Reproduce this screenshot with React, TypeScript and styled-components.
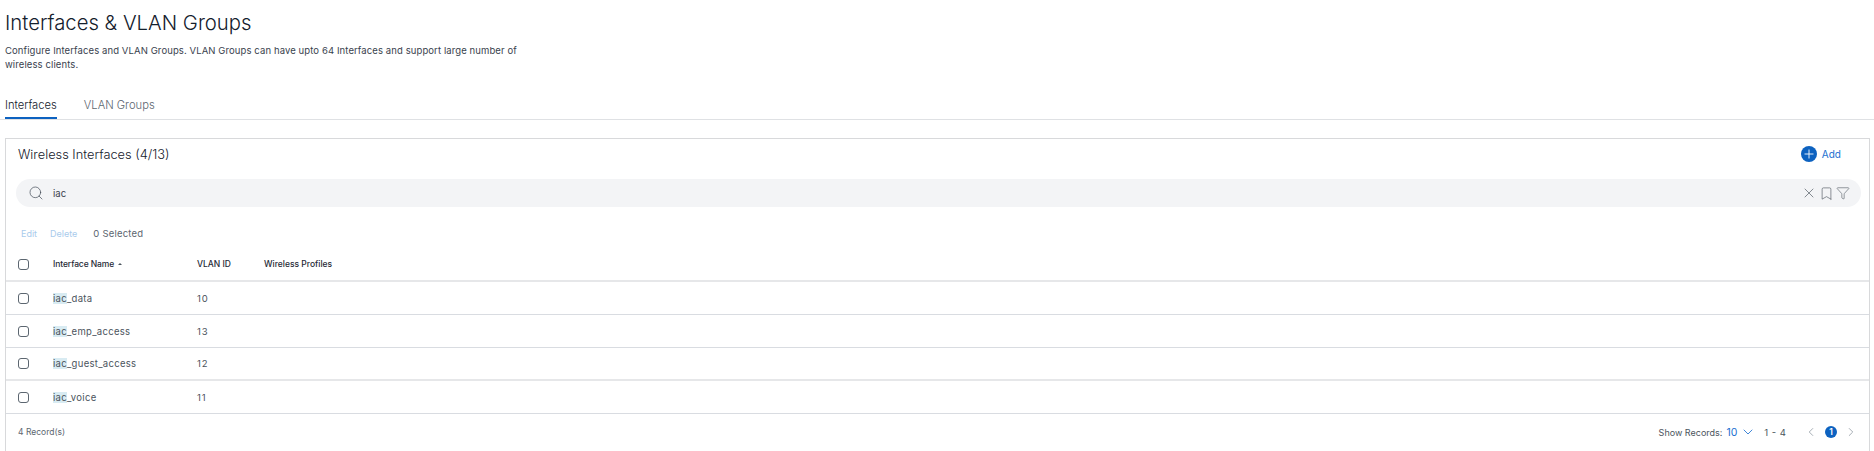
import styled, { createGlobalStyle } from "styled-components";
import { Bookmark, ChevronDown, ChevronLeft, ChevronRight, Filter, Plus, Search, X } from "lucide-react";

const rows = [
  { name: "_data", vlan: "10" },
  { name: "_emp_access", vlan: "13" },
  { name: "_guest_access", vlan: "12" },
  { name: "_voice", vlan: "11" },
];

export default function App() {
  return (
    <Page>
      <GlobalStyle />
      <Title>Interfaces &amp; VLAN Groups</Title>
      <Description>
        Configure Interfaces and VLAN Groups. VLAN Groups can have upto 64 Interfaces and support large number of
        wireless clients.
      </Description>

      <Tabs>
        <Tab $active>Interfaces</Tab>
        <Tab>VLAN Groups</Tab>
      </Tabs>

      <Card>
        <CardHeader>
          <CardTitle>Wireless Interfaces (4/13)</CardTitle>
          <AddButton>
            <AddIcon>
              <Plus size={14} strokeWidth={1.5} />
            </AddIcon>
            Add
          </AddButton>
        </CardHeader>

        <SearchBar>
          <Search size={16} strokeWidth={1} color="#39424e" />
          <SearchText>iac</SearchText>
          <SearchActions>
            <X size={16} strokeWidth={1} />
            <Bookmark size={15} strokeWidth={1} />
            <Filter size={14} strokeWidth={1} />
          </SearchActions>
        </SearchBar>

        <ActionRow>
          <ActionLink>Edit</ActionLink>
          <ActionLink>Delete</ActionLink>
          <SelectedCount>0 Selected</SelectedCount>
        </ActionRow>

        <HeaderRow>
          <CheckCell>
            <Checkbox />
          </CheckCell>
          <HeaderName>
            Interface Name <SortMark />
          </HeaderName>
          <VlanCell>VLAN ID</VlanCell>
          <div>Wireless Profiles</div>
        </HeaderRow>

        {rows.map((row) => (
          <Row key={row.name}>
            <CheckCell>
              <Checkbox />
            </CheckCell>
            <NameCell>
              <Match>iac</Match>
              {row.name}
            </NameCell>
            <VlanValue>{row.vlan}</VlanValue>
          </Row>
        ))}

        <Footer>
          <Records>4 Record(s)</Records>
          <Pager>
            <span>Show Records:</span>
            <PageSize>
              10
              <ChevronDown size={16} strokeWidth={1.25} />
            </PageSize>
            <Range>1 - 4</Range>
            <PageButtons>
              <ChevronLeft size={14} strokeWidth={1.5} color="#9aa2aa" />
              <CurrentPage>1</CurrentPage>
              <ChevronRight size={14} strokeWidth={1.5} color="#9aa2aa" />
            </PageButtons>
          </Pager>
        </Footer>
      </Card>
    </Page>
  );
}

const GlobalStyle = createGlobalStyle`
  html, body {
    margin: 0;
    background: #ffffff;
    overflow: hidden;
  }

  body {
    font-family: Inter, "Liberation Sans", sans-serif;
    color: #1f2a36;
  }
`;

const Page = styled.div`
  width: 1874px;
  height: 451px;
  overflow: hidden;
  padding: 8px 5px 0;
  box-sizing: border-box;
`;

const Title = styled.h1`
  margin: 0;
  font-size: 20.3px;
  font-weight: 300;
  line-height: 30px;
  color: #14202c;
`;

const Description = styled.p`
  margin: 6px 0 0;
  width: 520px;
  font-size: 9.5px;
  line-height: 14px;
  letter-spacing: 0.1px;
  color: #39424e;
`;

const Tabs = styled.div`
  display: flex;
  gap: 27px;
  margin: 21px -5px 0;
  padding-left: 5px;
  height: 26px;
  border-bottom: 1px solid #dfe1e4;
`;

const Tab = styled.div<{ $active?: boolean }>`
  height: 26px;
  box-sizing: border-box;
  font-size: 11.2px;
  font-weight: 300;
  line-height: 24px;
  color: ${(p) => (p.$active ? "#14202c" : "#5c6670")};
  border-bottom: ${(p) => (p.$active ? "2px solid #0d62c0" : "0")};
`;

const Card = styled.div`
  margin-top: 18px;
  width: 1865px;
  height: 320px;
  box-sizing: border-box;
  border: 1px solid #d8d9db;
  border-bottom: 0;
`;

const CardHeader = styled.div`
  display: flex;
  align-items: center;
  justify-content: space-between;
  height: 30px;
  padding: 0 28px 0 12px;
  margin-bottom: 10px;
`;

const CardTitle = styled.div`
  font-size: 12.8px;
  font-weight: 300;
  color: #14202c;
`;

const AddButton = styled.div`
  display: flex;
  align-items: center;
  gap: 5px;
  font-size: 10px;
  font-weight: 400;
  color: #1a6fd0;
`;

const AddIcon = styled.span`
  display: flex;
  align-items: center;
  justify-content: center;
  width: 16px;
  height: 16px;
  border-radius: 50%;
  background: #0d62c0;
  color: #ffffff;
`;

const SearchBar = styled.div`
  display: flex;
  align-items: center;
  height: 28px;
  margin: 0 8px 0 10px;
  padding: 0 11px 0 12px;
  border-radius: 14px;
  background: #f3f4f6;
`;

const SearchText = styled.span`
  margin-left: 9px;
  font-size: 9.5px;
  color: #39424e;
`;

const SearchActions = styled.div`
  display: flex;
  align-items: center;
  gap: 2px;
  margin-left: auto;
  color: #4b545d;
`;

const ActionRow = styled.div`
  display: flex;
  align-items: center;
  gap: 13px;
  height: 30px;
  margin-top: 11px;
  padding-left: 15px;
  font-size: 9px;
`;

const ActionLink = styled.span`
  color: #a9cbec;
`;

const SelectedCount = styled.span`
  margin-left: 3px;
  font-size: 9.5px;
  color: #5c6670;
  letter-spacing: 0.2px;
`;

const HeaderRow = styled.div`
  display: flex;
  align-items: center;
  height: 34px;
  box-sizing: border-box;
  font-size: 8.5px;
  font-weight: 500;
  color: #1f2a36;
  border-bottom: 2px solid #e6e7e9;
`;

const Row = styled.div`
  display: flex;
  align-items: center;
  height: 33px;
  box-sizing: border-box;
  font-size: 9.5px;
  letter-spacing: 0.3px;
  color: #4b545d;
  border-bottom: 1px solid #d9dce1;

  &:nth-of-type(7) {
    border-bottom: 2px solid #e6e7e9;
  }
`;

const CheckCell = styled.div`
  display: flex;
  width: 46px;
  padding-left: 12px;
  box-sizing: border-box;
`;

const Checkbox = styled.span`
  width: 9px;
  height: 9px;
  border: 1px solid #5c6670;
  border-radius: 3px;
`;

const NameCell = styled.div`
  display: flex;
  align-items: center;
  width: 144px;
  padding-left: 1px;
  white-space: pre;
`;

const HeaderName = styled(NameCell)`
  letter-spacing: -0.1px;
`;

const SortMark = styled.span`
  width: 0;
  height: 0;
  margin-left: 2px;
  border-left: 2px solid transparent;
  border-right: 2px solid transparent;
  border-bottom: 2px solid #4b545d;
`;

const Match = styled.span`
  background: #d8ebf2;
`;

const VlanCell = styled.div`
  width: 67px;
`;

const VlanValue = styled(VlanCell)`
  letter-spacing: 1px;
`;

const Footer = styled.div`
  display: flex;
  align-items: center;
  justify-content: space-between;
  height: 36px;
  padding: 0 11px 0 12px;
`;

const Records = styled.div`
  font-size: 8.5px;
  color: #5c6670;
`;

const Pager = styled.div`
  display: flex;
  align-items: center;
  font-size: 9px;
  color: #4b545d;
`;

const PageSize = styled.span`
  display: flex;
  align-items: center;
  gap: 3px;
  margin-left: 4px;
  font-size: 10.5px;
  color: #1a6fd0;
`;

const Range = styled.span`
  margin-left: 8px;
  font-size: 9.5px;
  word-spacing: 1px;
`;

const PageButtons = styled.div`
  display: flex;
  align-items: center;
  gap: 7px;
  margin-left: 18px;
`;

const CurrentPage = styled.span`
  display: flex;
  align-items: center;
  justify-content: center;
  width: 12px;
  height: 12px;
  border-radius: 50%;
  background: #0d62c0;
  color: #ffffff;
  font-size: 8.5px;
  font-weight: 600;
`;
